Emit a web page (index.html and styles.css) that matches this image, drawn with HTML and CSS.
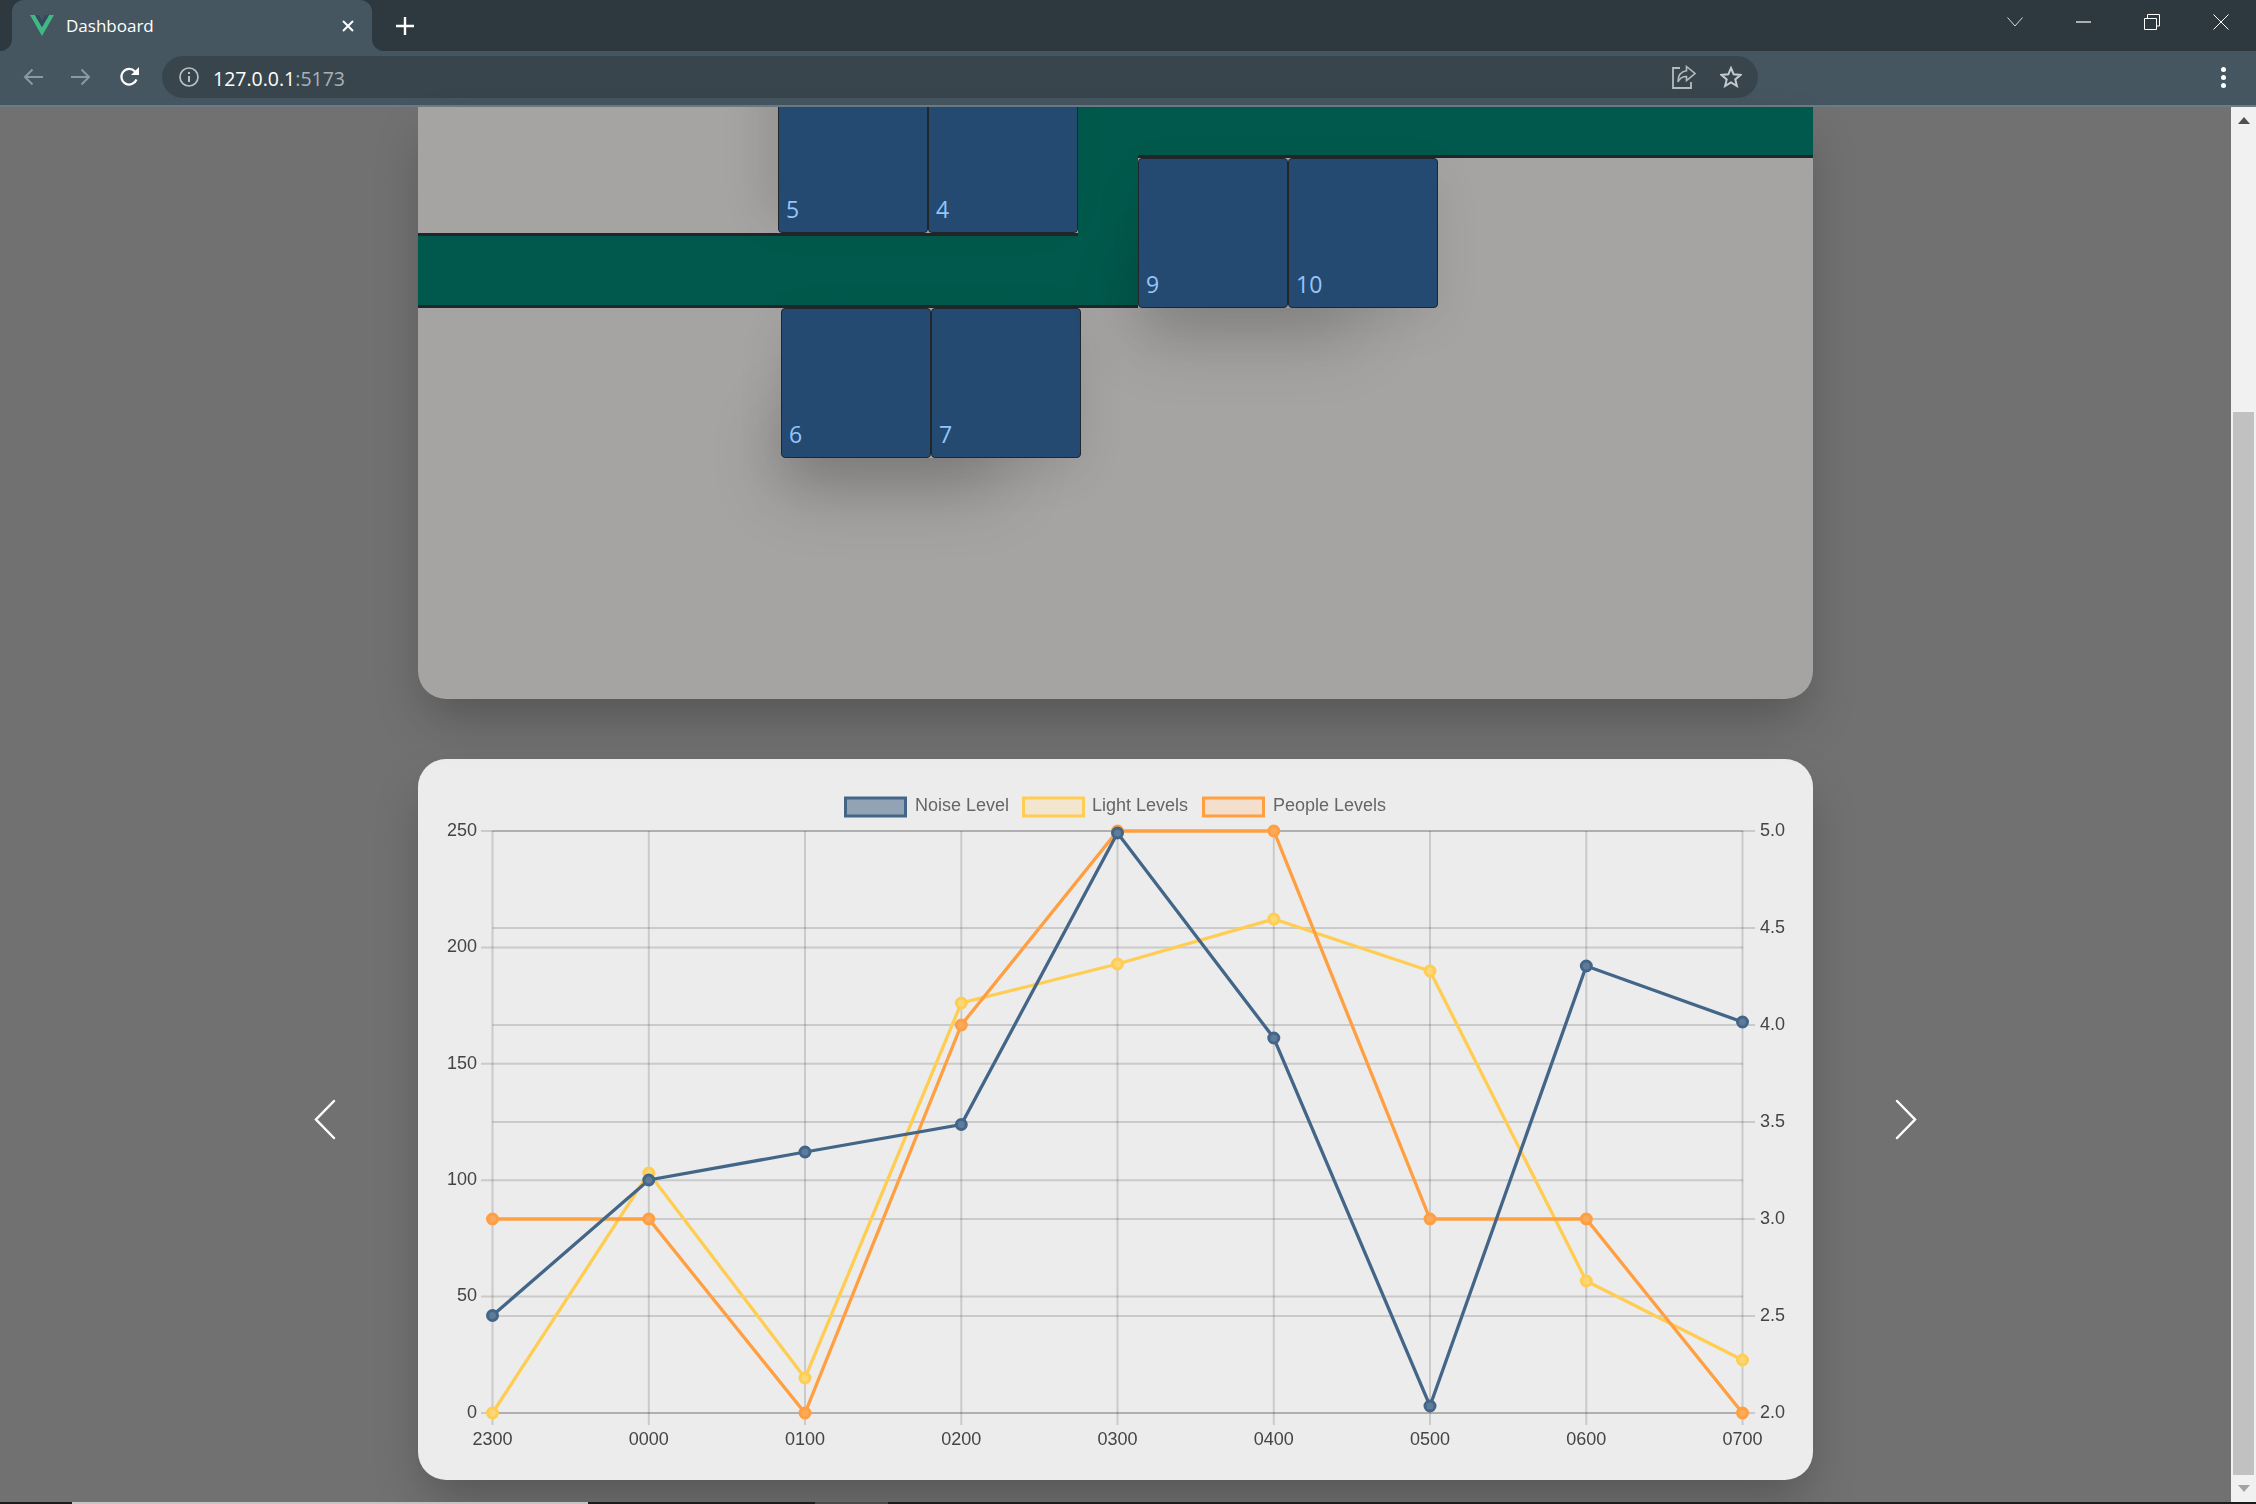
FILE: index.html
```html
<!DOCTYPE html>
<html lang="en">
<head>
    <meta charset="UTF-8">
    <meta name="viewport" content="width=device-width, initial-scale=1.0">
    <title>Dashboard</title>
    <link rel="stylesheet" href="styles.css">
</head>
<body>
    <div class="window">
        <!-- browser tabs -->
        <div class="tabstrip">
            <div class="tab">
                <svg class="tab-logo" width="24" height="21" viewBox="0 0 24 21">
                    <path d="M0 0H5L12 12L19 0H24L12 21Z" fill="#41b883"/>
                    <path d="M5 0H9L12 5.5L15 0H19L12 12Z" fill="#35495e"/>
                </svg>
                <span class="tab-title">Dashboard</span>
                <svg class="tab-close" width="12" height="12" viewBox="0 0 12 12">
                    <path d="M1 1L11 11M11 1L1 11" stroke="#fff" stroke-width="2"/>
                </svg>
            </div>
            <svg class="new-tab" width="18" height="18" viewBox="0 0 18 18">
                <path d="M9 0V18M0 9H18" stroke="#fff" stroke-width="2.4"/>
            </svg>
            <div class="window-controls">
                <svg width="16" height="10" viewBox="0 0 16 10">
                    <path d="M.5 .5L8 9L15.5 .5" fill="none" stroke="#d5d9db"/>
                </svg>
                <svg width="15" height="2" viewBox="0 0 15 2">
                    <path d="M0 1H15" stroke="#fff" stroke-width="1.2"/>
                </svg>
                <svg width="16" height="16" viewBox="0 0 16 16">
                    <path d="M.5 4.5H12.5V15.5H.5ZM3.5 4V.5H15.5V12H13" fill="none" stroke="#fff"/>
                </svg>
                <svg width="16" height="16" viewBox="0 0 16 16">
                    <path d="M.5 .5L15.5 15.5M15.5 .5L.5 15.5" stroke="#fff"/>
                </svg>
            </div>
        </div>

        <!-- address bar -->
        <div class="toolbar">
            <svg width="20" height="18" viewBox="0 0 20 18">
                <path d="M20 9H2M9.5 1.5L2 9L9.5 16.5" fill="none" stroke="#8b989f" stroke-width="2"/>
            </svg>
            <svg width="20" height="18" viewBox="0 0 20 18">
                <path d="M0 9H18M10.5 1.5L18 9L10.5 16.5" fill="none" stroke="#8b989f" stroke-width="2"/>
            </svg>
            <svg width="21" height="20" viewBox="0 0 21 20">
                <path d="M17.5 12.5A7.8 7.8 0 1 1 16 4.5" fill="none" stroke="#fff" stroke-width="2.2"/>
                <path d="M20 0V8H12Z" fill="#fff"/>
            </svg>
            <div class="omnibox">
                <svg width="20" height="20" viewBox="0 0 20 20">
                    <circle cx="10" cy="10" r="9" fill="none" stroke="#b9c0c4" stroke-width="1.7"/>
                    <path d="M10 9V15M10 5V7" stroke="#b9c0c4" stroke-width="2"/>
                </svg>
                <div class="url">127.0.0.1<span class="url-port">:5173</span></div>
                <svg class="share-icon" width="24" height="24" viewBox="0 0 24 24">
                    <path d="M8 3H1V23H19V17" fill="none" stroke="#b4bbbf" stroke-width="1.8"/>
                    <path d="M14.5 1.5L23 8.5L14.5 15.5V11.5C10 11.5 7.5 13.5 6 17C6 10.5 9.5 6.5 14.5 5.8Z" fill="none" stroke="#b4bbbf" stroke-width="1.6"/>
                </svg>
                <svg width="22" height="22" viewBox="0 0 22 22">
                    <path d="M11 2L13.7 8.3L20.5 8.9L15.3 13.4L16.9 20L11 16.5L5.1 20L6.7 13.4L1.5 8.9L8.3 8.3Z" fill="none" stroke="#c5cacd" stroke-width="2"/>
                </svg>
            </div>
            <div class="kebab"><i></i><i></i><i></i></div>
        </div>

        <div class="viewport">
            <div class="page">
                <div class="card floorplan">
                    <div class="corridor corridor-top"></div>
                    <div class="corridor corridor-mid"></div>
                    <div class="corridor corridor-link"></div>
                    <div class="wall wall-upper-left"></div>
                    <div class="wall wall-lower-left"></div>
                    <div class="wall wall-upper-right"></div>

                    <div class="room-pair pair-a">
                        <div class="room">5</div>
                        <div class="room">4</div>
                    </div>
                    <div class="room-pair pair-b">
                        <div class="room">6</div>
                        <div class="room">7</div>
                    </div>
                    <div class="room-pair pair-c">
                        <div class="room">9</div>
                        <div class="room">10</div>
                    </div>
                </div>

                <div class="chart-row">
                    <svg class="carousel-arrow" width="22" height="41" viewBox="0 0 22 41">
                        <path d="M20 2L2 20.5L20 39" fill="none" stroke="#fff" stroke-width="2.5" stroke-linecap="round"/>
                    </svg>
                    <div class="card chart-card">
                        <svg class="chart" width="1395" height="721" viewBox="418 759 1395 721">
                            <!-- legend -->
                            <g class="legend">
                                <rect x="845.5" y="798" width="60" height="18" fill="#91a3b4" stroke="#436688" stroke-width="3"/>
                                <text x="915" y="811">Noise Level</text>
                                <rect x="1023.5" y="798" width="60" height="18" fill="#f3e6cf" stroke="#ffcd52" stroke-width="3"/>
                                <text x="1092" y="811">Light Levels</text>
                                <rect x="1203.5" y="798" width="60" height="18" fill="#f3dfcc" stroke="#ff9f40" stroke-width="3"/>
                                <text x="1273" y="811">People Levels</text>
                            </g>

                            <!-- grid -->
                            <g class="grid">
                                <path d="M492.5 831V1425M648.8 831V1425M805 831V1425M961.3 831V1425M1117.5 831V1425M1273.8 831V1425M1430 831V1425M1586.3 831V1425M1742.5 831V1425"/>
                                <path d="M481 831H1743M481 947.5H1743M481 1063.8H1743M481 1180.2H1743M481 1296.6H1743M481 1413H1743"/>
                                <path d="M492.5 831H1755M492.5 928H1755M492.5 1025H1755M492.5 1122H1755M492.5 1219H1755M492.5 1316H1755M492.5 1413H1755"/>
                            </g>

                            <!-- axes -->
                            <g class="ticks ticks-left">
                                <text x="477" y="836">250</text>
                                <text x="477" y="952">200</text>
                                <text x="477" y="1069">150</text>
                                <text x="477" y="1185">100</text>
                                <text x="477" y="1301">50</text>
                                <text x="477" y="1418">0</text>
                            </g>
                            <g class="ticks ticks-right">
                                <text x="1760" y="836">5.0</text>
                                <text x="1760" y="933">4.5</text>
                                <text x="1760" y="1030">4.0</text>
                                <text x="1760" y="1127">3.5</text>
                                <text x="1760" y="1224">3.0</text>
                                <text x="1760" y="1321">2.5</text>
                                <text x="1760" y="1418">2.0</text>
                            </g>
                            <g class="ticks ticks-bottom">
                                <text x="492.5" y="1445">2300</text>
                                <text x="648.8" y="1445">0000</text>
                                <text x="805" y="1445">0100</text>
                                <text x="961.3" y="1445">0200</text>
                                <text x="1117.5" y="1445">0300</text>
                                <text x="1273.8" y="1445">0400</text>
                                <text x="1430" y="1445">0500</text>
                                <text x="1586.3" y="1445">0600</text>
                                <text x="1742.5" y="1445">0700</text>
                            </g>

                            <!-- light -->
                            <g class="series series-light">
                                <polyline points="492.5,1413 648.8,1173 805,1378 961.3,1003 1117.5,964 1273.8,919 1430,971 1586.3,1281 1742.5,1360"/>
                                <circle cx="492.5" cy="1413" r="5"/>
                                <circle cx="648.8" cy="1173" r="5"/>
                                <circle cx="805" cy="1378" r="5"/>
                                <circle cx="961.3" cy="1003" r="5"/>
                                <circle cx="1117.5" cy="964" r="5"/>
                                <circle cx="1273.8" cy="919" r="5"/>
                                <circle cx="1430" cy="971" r="5"/>
                                <circle cx="1586.3" cy="1281" r="5"/>
                                <circle cx="1742.5" cy="1360" r="5"/>
                            </g>
                            <!-- people -->
                            <g class="series series-people">
                                <polyline points="492.5,1219 648.8,1219 805,1413 961.3,1025 1117.5,831 1273.8,831 1430,1219 1586.3,1219 1742.5,1413"/>
                                <circle cx="492.5" cy="1219" r="5"/>
                                <circle cx="648.8" cy="1219" r="5"/>
                                <circle cx="805" cy="1413" r="5"/>
                                <circle cx="961.3" cy="1025" r="5"/>
                                <circle cx="1117.5" cy="831" r="5"/>
                                <circle cx="1273.8" cy="831" r="5"/>
                                <circle cx="1430" cy="1219" r="5"/>
                                <circle cx="1586.3" cy="1219" r="5"/>
                                <circle cx="1742.5" cy="1413" r="5"/>
                            </g>
                            <!-- noise -->
                            <g class="series series-noise">
                                <polyline points="492.5,1315.5 648.8,1180 805,1152 961.3,1124.5 1117.5,833 1273.8,1038 1430,1406 1586.3,966 1742.5,1022"/>
                                <circle cx="492.5" cy="1315.5" r="5"/>
                                <circle cx="648.8" cy="1180" r="5"/>
                                <circle cx="805" cy="1152" r="5"/>
                                <circle cx="961.3" cy="1124.5" r="5"/>
                                <circle cx="1117.5" cy="833" r="5"/>
                                <circle cx="1273.8" cy="1038" r="5"/>
                                <circle cx="1430" cy="1406" r="5"/>
                                <circle cx="1586.3" cy="966" r="5"/>
                                <circle cx="1742.5" cy="1022" r="5"/>
                            </g>
                        </svg>
                    </div>
                    <svg class="carousel-arrow" width="22" height="41" viewBox="0 0 22 41">
                        <path d="M2 2L20 20.5L2 39" fill="none" stroke="#fff" stroke-width="2.5" stroke-linecap="round"/>
                    </svg>
                </div>
            </div>
            <div class="scrollbar">
                <div class="scroll-up"></div>
                <div class="scroll-space"><div class="scroll-thumb"></div></div>
                <div class="scroll-down"></div>
            </div>
        </div>

        <div class="bottom-edge">
            <div class="bottom-thumb"></div>
            <div class="bottom-mark"></div>
        </div>
    </div>
</body>
</html>
```

FILE: styles.css
```css
* {
    box-sizing: border-box;
}
body {
    margin: 0;
    font-family: "Liberation Sans", Arial, sans-serif;
}
svg {
    display: block;
    flex: none;
}
.window {
    display: flex;
    flex-direction: column;
    height: 1504px;
    overflow: hidden;
    background-color: #717171;
}

/* tabs */
.tabstrip {
    display: flex;
    align-items: center;
    height: 51px;
    padding-left: 12px;
    background-color: #2d383f;
}
.tab {
    position: relative;
    display: flex;
    align-items: center;
    width: 360px;
    height: 51px;
    padding: 0 18px;
    background-color: #455660;
    border-radius: 12px 12px 0 0;
}
.tab::before,
.tab::after {
    content: "";
    position: absolute;
    bottom: 0;
    width: 12px;
    height: 12px;
}
.tab::before {
    left: -12px;
    background: radial-gradient(circle at 0 0, #2d383f 11.5px, #455660 12.5px);
}
.tab::after {
    right: -12px;
    background: radial-gradient(circle at 100% 0, #2d383f 11.5px, #455660 12.5px);
}
.tab-logo {
    margin-right: 12px;
}
.tab-title {
    flex: 1;
    color: #fff;
    font-family: "Open Sans", sans-serif;
    font-size: 17px;
}
.new-tab {
    margin-left: 24px;
}
.window-controls {
    display: flex;
    align-items: center;
    gap: 53px;
    margin-left: auto;
    margin-top: -8px;
    padding-right: 27px;
}

/* address bar */
.toolbar {
    display: flex;
    align-items: center;
    gap: 28px;
    height: 56px;
    padding: 0 0 2px 23px;
    background-color: #455660;
    border-bottom: 2px solid #6b7c86;
}
.omnibox {
    display: flex;
    align-items: center;
    width: 1596px;
    height: 42px;
    margin-left: -6px;
    padding: 0 16px 0 17px;
    background-color: #39454d;
    border-radius: 21px;
}
.url {
    flex: 1;
    margin-left: 14px;
    padding-top: 2px;
    color: #fff;
    font-family: "Open Sans", sans-serif;
    font-size: 19.5px;
}
.url-port {
    color: #a9b1b6;
}
.share-icon {
    margin-right: 24px;
}
.kebab {
    display: flex;
    flex-direction: column;
    gap: 3px;
    margin-left: auto;
    margin-right: 30px;
}
.kebab i {
    width: 5px;
    height: 5px;
    background-color: #fff;
    border-radius: 50%;
}

/* page */
.viewport {
    flex: 1;
    display: flex;
    min-height: 0;
}
.page {
    flex: 1;
    display: flex;
    flex-direction: column;
    align-items: center;
    gap: 60px;
    min-width: 0;
}
.chart-row {
    display: flex;
    align-items: center;
    gap: 82px;
}
.card {
    width: 1395px;
    flex: none;
    box-shadow: 0 25px 50px -8px rgba(0, 0, 0, 0.25);
}
.floorplan {
    position: relative;
    height: 592px;
    overflow: hidden;
    background-color: #a5a4a2;
    border-radius: 0 0 28px 28px;
}
.chart-card {
    height: 721px;
    background-color: #ececec;
    border-radius: 28px;
}

/* floor plan, coordinates are relative to the card */
.corridor {
    position: absolute;
    background-color: #00594c;
}
.corridor-top {
    left: 660px;
    top: 0;
    width: 735px;
    height: 48px;
}
.corridor-mid {
    left: 0;
    top: 129px;
    width: 720px;
    height: 69px;
}
.corridor-link {
    left: 660px;
    top: 0;
    width: 60px;
    height: 198px;
}
.wall {
    position: absolute;
    height: 3px;
    background-color: #21262b;
}
.wall-upper-left {
    left: 0;
    top: 126px;
    width: 660px;
}
.wall-lower-left {
    left: 0;
    top: 198px;
    width: 720px;
}
.wall-upper-right {
    left: 720px;
    top: 48px;
    width: 675px;
}
.room-pair {
    position: absolute;
    display: flex;
}
.pair-a {
    left: 360px;
    top: -24px;
    box-shadow: -15px -15px 40px rgba(0, 0, 0, 0.1);
}
.pair-b {
    left: 363px;
    top: 201px;
    box-shadow: -40px 70px 70px -40px rgba(0, 0, 0, 0.22), 0 15px 50px -5px rgba(0, 0, 0, 0.12);
}
.pair-c {
    left: 720px;
    top: 51px;
    box-shadow: -40px 70px 70px -40px rgba(0, 0, 0, 0.18), 0 15px 50px -5px rgba(0, 0, 0, 0.1);
}
.room {
    display: flex;
    align-items: flex-end;
    width: 150px;
    height: 150px;
    padding: 0 0 8px 7px;
    color: #93c5fd;
    font-family: "Open Sans", sans-serif;
    font-size: 23px;
    line-height: 30px;
    background-color: #244a71;
    border: 1px solid #21262b;
    border-radius: 4px;
}

/* chart */
.chart {
    filter: blur(0.5px);
}
.chart text {
    font-size: 18px;
}
.legend text {
    fill: #666;
}
.grid path {
    fill: none;
    stroke: rgba(0, 0, 0, 0.14);
    stroke-width: 2;
}
.ticks text {
    fill: #444;
}
.ticks-left text {
    text-anchor: end;
}
.ticks-bottom text {
    text-anchor: middle;
}
.series polyline {
    fill: none;
    stroke-width: 3.3;
}
.series circle {
    stroke-width: 3;
}
.series-noise polyline,
.series-noise circle {
    stroke: #436688;
}
.series-noise circle {
    fill: #5d7c99;
}
.series-light polyline,
.series-light circle {
    stroke: #ffcd52;
}
.series-light circle {
    fill: #fbd777;
}
.series-people polyline,
.series-people circle {
    stroke: #ff9f40;
}
.series-people circle {
    fill: #fba95a;
}

/* scrollbar */
.scrollbar {
    display: flex;
    flex-direction: column;
    width: 25px;
    background-color: #f1f1f1;
}
.scroll-up,
.scroll-down {
    width: 0;
    height: 0;
    margin: 10px auto;
    border-left: 6px solid transparent;
    border-right: 6px solid transparent;
}
.scroll-up {
    border-bottom: 7px solid #505050;
}
.scroll-down {
    border-top: 7px solid #a3a3a3;
}
.scroll-space {
    flex: 1;
    padding-top: 278px;
}
.scroll-thumb {
    width: 21px;
    height: 100%;
    margin-left: 2px;
    background-color: #c1c1c1;
}
.bottom-edge {
    flex: none;
    display: flex;
    height: 2px;
    padding-left: 72px;
    background-color: #1c1c1c;
}
.bottom-thumb {
    width: 516px;
    background-color: #c4c4c4;
}
.bottom-mark {
    width: 73px;
    margin-left: 227px;
    background-color: #4a4a4a;
}
```
